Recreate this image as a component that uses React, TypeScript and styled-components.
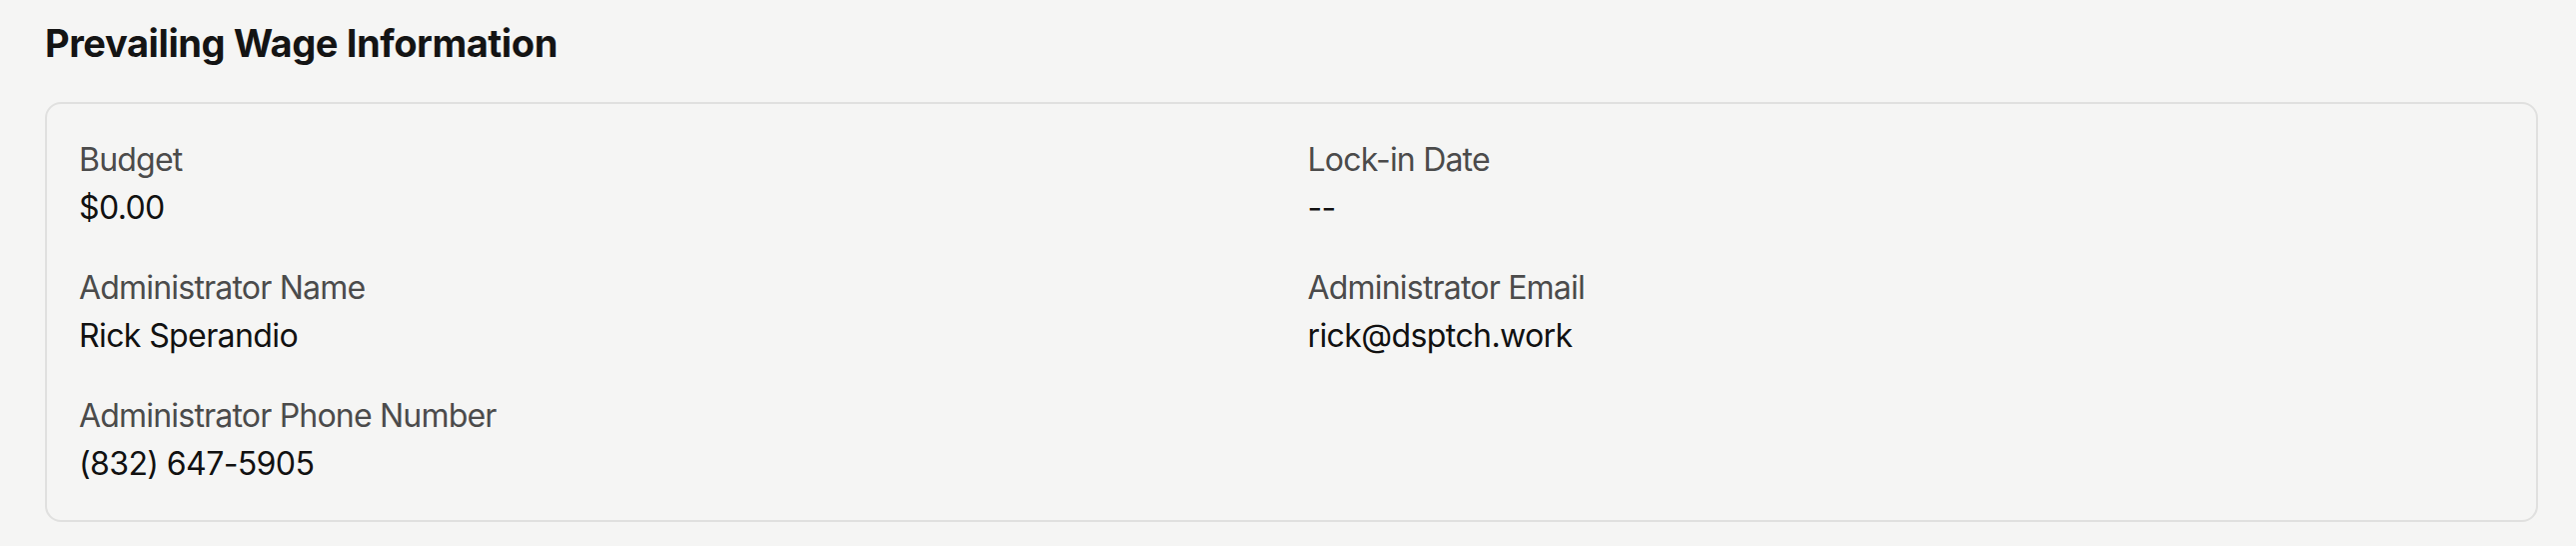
import React from "react";
import styled, { createGlobalStyle } from "styled-components";

const GlobalStyle = createGlobalStyle`
  html, body {
    margin: 0;
    padding: 0;
    background: #f5f5f4;
  }
  body {
    font-family: Inter, "Noto Sans", "Liberation Sans", sans-serif;
    -webkit-font-smoothing: antialiased;
  }
`;

const Page = styled.div`
  padding: 15px 38px 24px 45px;
  background: #f5f5f4;
  min-height: 546px;
  box-sizing: border-box;
`;

const Title = styled.h2`
  margin: 0 0 31px 0;
  font-size: 38px;
  line-height: 56px;
  font-weight: 700;
  color: #141414;
  letter-spacing: -0.4px;
`;

const Card = styled.section`
  border: 2px solid #e0e0df;
  border-radius: 16px;
  padding: 32px;
  display: grid;
  grid-template-columns: 1fr 1fr;
  column-gap: 32px;
  row-gap: 32px;
  background: #f5f5f4;
`;

const Field = styled.div`
  display: flex;
  flex-direction: column;
`;

const Label = styled.span`
  font-size: 32px;
  line-height: 48px;
  color: #4b4b4b;
  letter-spacing: -0.8px;
`;

const Value = styled.span`
  font-size: 32px;
  line-height: 48px;
  color: #111111;
  letter-spacing: -0.6px;
`;

const fields = [
  { label: "Budget", value: "$0.00" },
  { label: "Lock-in Date", value: "--" },
  { label: "Administrator Name", value: "Rick Sperandio" },
  { label: "Administrator Email", value: "rick@dsptch.work" },
  { label: "Administrator Phone Number", value: "(832) 647-5905" },
];

export default function App() {
  return (
    <>
      <GlobalStyle />
      <Page>
        <Title>Prevailing Wage Information</Title>
        <Card>
          {fields.map((f) => (
            <Field key={f.label}>
              <Label>{f.label}</Label>
              <Value>{f.value}</Value>
            </Field>
          ))}
        </Card>
      </Page>
    </>
  );
}
